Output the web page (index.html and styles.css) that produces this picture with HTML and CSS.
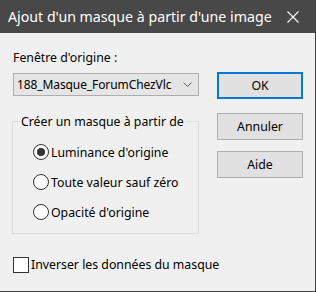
FILE: index.html
```html
<!DOCTYPE html>
<html lang="fr">
<head>
    <meta charset="UTF-8">
    <title>Ajout d'un masque à partir d'une image</title>
    <link rel="stylesheet" href="styles.css">
</head>
<body>
    <div class="window">
        <div class="titlebar">
            <span class="title">Ajout d'un masque à partir d'une image</span>
            <svg class="close" width="12" height="12" viewBox="0 0 12 12">
                <path d="M0.5 0.5 L11.5 11.5 M11.5 0.5 L0.5 11.5" stroke="#fff" stroke-width="1.1" fill="none"/>
            </svg>
        </div>

        <div class="content">
            <div class="left">
                <div class="label">Fenêtre d'origine :</div>
                <div class="combo">
                    <span class="combo-text">188_Masque_ForumChezVlc</span>
                    <svg class="chevron" width="9" height="5" viewBox="0 0 9 5">
                        <path d="M0.5 0.5 L4.5 4.5 L8.5 0.5" stroke="#606060" stroke-width="1" fill="none"/>
                    </svg>
                </div>

                <!-- Group box -->
                <fieldset class="group">
                    <legend>Créer un masque à partir de</legend>
                    <div class="options">
                        <div class="radio-row">
                            <span class="radio checked"></span>
                            <span>Luminance d'origine</span>
                        </div>
                        <div class="radio-row">
                            <span class="radio"></span>
                            <span>Toute valeur sauf zéro</span>
                        </div>
                        <div class="radio-row">
                            <span class="radio"></span>
                            <span>Opacité d'origine</span>
                        </div>
                    </div>
                </fieldset>

                <div class="check-row">
                    <span class="checkbox"></span>
                    <span>Inverser les données du masque</span>
                </div>
            </div>

            <div class="right">
                <div class="button default">OK</div>
                <div class="button">Annuler</div>
                <div class="button">Aide</div>
            </div>
        </div>
    </div>
</body>
</html>
```

FILE: styles.css
```css
* {
    box-sizing: border-box;
}

body {
    margin: 0;
    font-family: "Noto Sans", "Open Sans", sans-serif;
    font-size: 12.3px;
    color: #000;
    background-color: #f0f0f0;
    white-space: nowrap;
}

.window {
    width: 316px;
    height: 292px;
    background-color: #f0f0f0;
    border-right: 1px solid #3f3f3f;
    border-bottom: 1px solid #3f3f3f;
}

.titlebar {
    height: 33px;
    background-color: #484848;
    color: #fff;
    display: flex;
    align-items: center;
    padding-left: 8px;
    font-size: 14.2px;
}

.title {
    flex: 1;
}

.close {
    margin-right: 16px;
}

.content {
    display: flex;
    padding-left: 12px;
}

.left {
    width: 187px;
}

.label {
    margin-top: 16px;
    margin-left: 1px;
    line-height: 18px;
}

.combo {
    margin-top: 6px;
    margin-left: 1px;
    height: 23px;
    border: 1px solid #adadad;
    background-color: #e5e5e5;
    display: flex;
    align-items: center;
    padding-left: 3px;
    padding-right: 6px;
}

.combo-text {
    flex: 1;
    font-size: 12px;
    letter-spacing: -0.1px;
}

.chevron {
    flex-shrink: 0;
}

.group {
    margin: 17px 0 0 0;
    padding: 0;
    height: 121px;
    border: 1px solid #dcdcdc;
}

.group legend {
    padding: 0 1px;
    margin-left: 7px;
    line-height: 17px;
}

.options {
    padding: 7px 0 0 20px;
}

.radio-row {
    display: flex;
    align-items: center;
    height: 30px;
}

.radio {
    flex-shrink: 0;
    width: 16px;
    height: 16px;
    border: 1px solid #333;
    border-radius: 50%;
    background-color: #fff;
    margin-right: 2px;
    display: flex;
    align-items: center;
    justify-content: center;
}

.radio.checked::after {
    content: "";
    width: 8px;
    height: 8px;
    border-radius: 50%;
    background-color: #333;
}

.check-row {
    display: flex;
    align-items: center;
    margin-top: 22px;
    margin-left: 1px;
}

.checkbox {
    flex-shrink: 0;
    width: 16px;
    height: 16px;
    border: 1px solid #333;
    background-color: #fff;
    margin-right: 2px;
}

.right {
    margin-left: 18px;
    width: 86px;
    padding-top: 39px;
    display: flex;
    flex-direction: column;
}

.button {
    height: 27px;
    border: 1px solid #adadad;
    background-color: #e1e1e1;
    display: flex;
    align-items: center;
    justify-content: center;
    margin-bottom: 11px;
}

.button.default {
    border: 2px solid #0078d7;
    margin-bottom: 14px;
}
```
